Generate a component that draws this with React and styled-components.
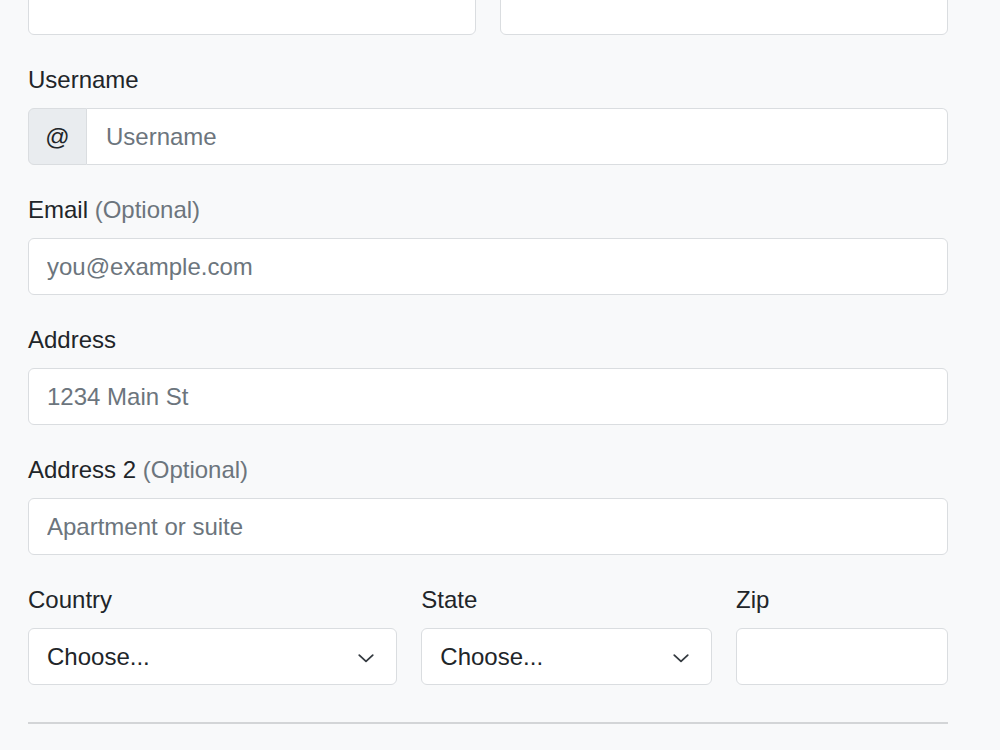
import React from 'react';
import styled, { createGlobalStyle } from 'styled-components';

const GlobalStyle = createGlobalStyle`
  html, body {
    margin: 0;
    padding: 0;
    background: #f8f9fa;
    overflow: hidden;
  }
  body {
    font-family: "Liberation Sans", Arial, sans-serif;
    color: #212529;
  }
  * { box-sizing: border-box; }
`;

const Page = styled.div`
  width: 1000px;
  height: 750px;
  overflow: hidden;
`;

/* the form scrolls past its first row: only the bottom of the name inputs shows */
const Form = styled.form`
  width: 920px;
  margin: -22px 0 0 28px;
`;

const Row = styled.div`
  display: grid;
  grid-template-columns: repeat(12, 1fr);
  column-gap: 24px;
  row-gap: 27px;
`;

const Col = styled.div`
  grid-column: span ${p => p.span || 12};
  display: flex;
  flex-direction: column;
`;

const Label = styled.label`
  display: block;
  font-size: 24px;
  line-height: 36px;
  margin-bottom: 10px;
  color: #212529;
`;

const Muted = styled.span`
  color: #6c757d;
`;

const Input = styled.input`
  display: block;
  width: 100%;
  height: 57px;
  padding: 0 18px;
  font-family: inherit;
  font-size: 24px;
  color: #212529;
  background: #fff;
  border: 1.5px solid #dadde0;
  border-radius: 6px;
  outline: none;

  &::placeholder {
    color: #6c757d;
    opacity: 1;
  }

  ${p => p.grouped && `
    border-top-left-radius: 0;
    border-bottom-left-radius: 0;
    border-left-width: 0;
    padding-left: 19px;
    flex: 1;
  `}
`;

const Group = styled.div`
  display: flex;
  width: 100%;
`;

const Addon = styled.span`
  display: flex;
  align-items: center;
  justify-content: center;
  width: 59px;
  height: 57px;
  font-size: 24px;
  color: #212529;
  background: #e9ecef;
  border: 1.5px solid #dadde0;
  border-radius: 6px 0 0 6px;
`;

const SelectWrap = styled.div`
  position: relative;
  width: 100%;
`;

const Select = styled.select`
  display: block;
  width: 100%;
  height: 57px;
  padding: 0 54px 0 18px;
  font-family: inherit;
  font-size: 24px;
  color: #212529;
  background: #fff;
  border: 1.5px solid #dadde0;
  border-radius: 6px;
  appearance: none;
  -webkit-appearance: none;
  outline: none;
`;

const Chevron = styled.svg`
  position: absolute;
  right: 22px;
  top: 50%;
  width: 18px;
  height: 18px;
  margin-top: -8px;
  pointer-events: none;
`;

const Divider = styled.hr`
  margin: 37px 0 0;
  border: 0;
  border-top: 2px solid #d3d5d7;
`;

function ChevronDown() {
  return (
    <Chevron viewBox="0 0 16 16">
      <path d="M2 5.5l6 5.5 6-5.5" fill="none" stroke="#343a40" strokeWidth="1.6" strokeLinecap="round" strokeLinejoin="round" />
    </Chevron>
  );
}

function Field({ label, optional, span, placeholder }) {
  return (
    <Col span={span}>
      {label && (
        <Label>
          {label}
          {optional && <Muted> (Optional)</Muted>}
        </Label>
      )}
      <Input type="text" placeholder={placeholder} />
    </Col>
  );
}

function SelectField({ label, span }) {
  return (
    <Col span={span}>
      <Label>{label}</Label>
      <SelectWrap>
        <Select defaultValue="">
          <option value="">Choose...</option>
        </Select>
        <ChevronDown />
      </SelectWrap>
    </Col>
  );
}

export default function App() {
  return (
    <Page>
      <GlobalStyle />
      <Form>
        <Row>
          <Field span={6} />
          <Field span={6} />

          <Col span={12}>
            <Label>Username</Label>
            <Group>
              <Addon>@</Addon>
              <Input grouped type="text" placeholder="Username" />
            </Group>
          </Col>

          <Field label="Email" optional span={12} placeholder="you@example.com" />
          <Field label="Address" span={12} placeholder="1234 Main St" />
          <Field label="Address 2" optional span={12} placeholder="Apartment or suite" />

          <SelectField label="Country" span={5} />
          <SelectField label="State" span={4} />
          <Field label="Zip" span={3} />
        </Row>
        <Divider />
      </Form>
    </Page>
  );
}
